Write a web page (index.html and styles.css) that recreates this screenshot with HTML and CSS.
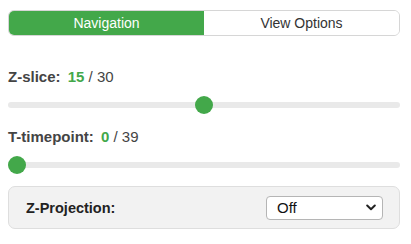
FILE: index.html
```html
<!DOCTYPE html>
<html>
<head>
<meta charset="utf-8">
<link rel="stylesheet" href="styles.css">
</head>
<body>
<div class="panel">
  <div class="tabs">
    <div class="tab active">Navigation</div>
    <div class="tab">View Options</div>
  </div>
  <div class="field">
    <div class="label">Z-slice: <span class="val">15</span><span class="tot"> / 30</span></div>
    <div class="track"><div class="thumb thumb-z"></div></div>
  </div>
  <div class="field field-t">
    <div class="label">T-timepoint: <span class="val">0</span><span class="tot"> / 39</span></div>
    <div class="track"><div class="thumb thumb-t"></div></div>
  </div>
  <div class="proj">
    <span class="proj-label">Z-Projection:</span>
    <div class="select">
      <span>Off</span>
      <svg width="10" height="7" viewBox="0 0 10 7"><path d="M1.2 1.5 L5 5.2 L8.8 1.5" fill="none" stroke="#222" stroke-width="2" stroke-linecap="round" stroke-linejoin="round"/></svg>
    </div>
  </div>
</div>
</body>
</html>
```
FILE: styles.css
```css
html, body { margin: 0; padding: 0; background: #fff; }
body { padding: 8px; font-family: "Liberation Sans", Arial, sans-serif; color: #444; }
.panel { width: 392px; }
.tabs {
  display: flex;
  margin-top: 2px;
  height: 26px;
  border: 1px solid #d6d6d6;
  border-radius: 6px;
  overflow: hidden;
  box-sizing: border-box;
}
.tab {
  flex: 1;
  display: flex;
  align-items: center;
  justify-content: center;
  font-size: 14px;
  color: #333;
  background: #fff;
}
.tab.active { background: #43a84a; color: #fff; }
.field { margin-top: 32px; }
.field-t { margin-top: 20px; }
.label { font-size: 15px; font-weight: bold; color: #444; line-height: 18px; }
.label .val { color: #43a84a; margin-left: 3px; }
.label .tot { font-weight: normal; }
.track {
  position: relative;
  margin-top: 16px;
  height: 6px;
  border-radius: 3px;
  background: #e9e9e9;
}
.thumb {
  position: absolute;
  top: -6px;
  width: 18px;
  height: 18px;
  border-radius: 50%;
  background: #43a84a;
}
.thumb-z { left: 187px; }
.thumb-t { left: 0; }
.proj {
  margin-top: 18px;
  height: 43px;
  box-sizing: border-box;
  border: 1px solid #dedede;
  border-radius: 7px;
  background: #f2f2f2;
  display: flex;
  align-items: center;
  justify-content: space-between;
  padding: 0 16px 0 17px;
}
.proj-label { font-size: 14.5px; font-weight: bold; color: #222; }
.select {
  width: 117px;
  height: 24px;
  box-sizing: border-box;
  border: 1px solid #b5b5b5;
  border-radius: 4px;
  background: #fff;
  display: flex;
  align-items: center;
  justify-content: space-between;
  padding: 0 6px 0 10px;
  font-size: 15px;
  color: #111;
}
```
